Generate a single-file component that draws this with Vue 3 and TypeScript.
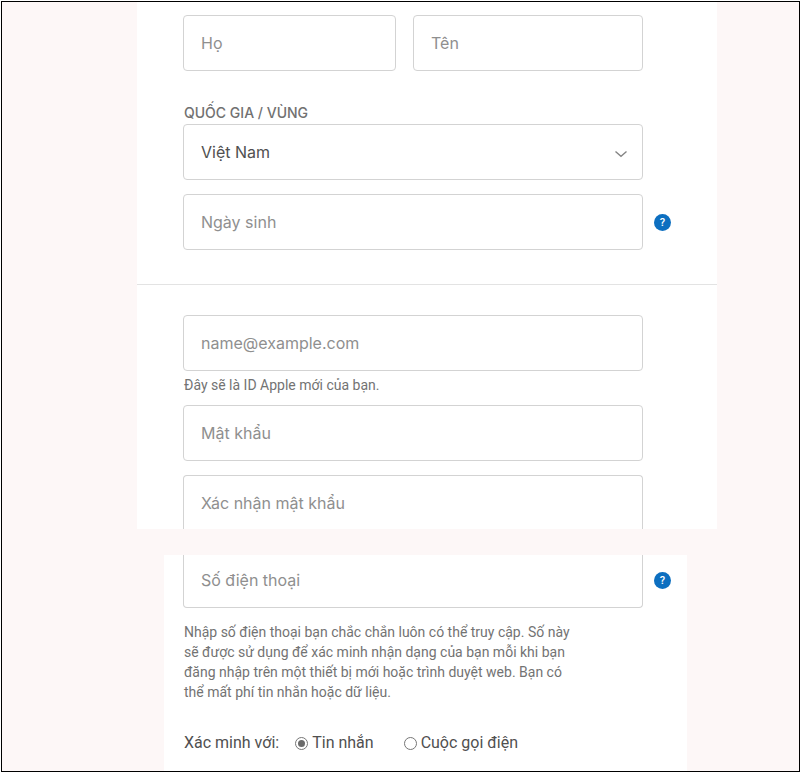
<script setup lang="ts">
import { ref } from 'vue'

const lastName = ref('')
const firstName = ref('')
const country = ref('VN')
const birthday = ref('')
const email = ref('')
const password = ref('')
const confirmPassword = ref('')
const phone = ref('')
const verifyMethod = ref('sms')
</script>

<template>
  <form class="page" @submit.prevent>
    <section class="panel account">
      <div class="column names">
        <input v-model="lastName" class="field" type="text" placeholder="Họ" aria-label="Họ" />
        <input v-model="firstName" class="field" type="text" placeholder="Tên" aria-label="Tên" />
      </div>

      <div class="column country">
        <label class="caption" for="country">QUỐC GIA / VÙNG</label>
        <div class="select-wrap">
          <select id="country" v-model="country" class="field">
            <option value="VN">Việt Nam</option>
          </select>
          <svg class="chevron" width="14" height="8" viewBox="0 0 14 8" aria-hidden="true">
            <path d="M1.5 1.5 7 6.3l5.5-4.8" />
          </svg>
        </div>
      </div>

      <div class="row birthday">
        <input v-model="birthday" class="field" type="text" placeholder="Ngày sinh" aria-label="Ngày sinh" />
        <button class="help" type="button">?</button>
      </div>

      <hr class="divider" />

      <div class="column">
        <input id="email" v-model="email" class="field" type="email" placeholder="name@example.com" aria-labelledby="email-note" />
        <label id="email-note" class="note" for="email">Đây sẽ là ID Apple mới của bạn.</label>
        <input v-model="password" class="field" type="password" placeholder="Mật khẩu" aria-label="Mật khẩu" />
        <input v-model="confirmPassword" class="field open-bottom" type="password" placeholder="Xác nhận mật khẩu" aria-label="Xác nhận mật khẩu" />
      </div>
    </section>

    <section class="panel phone">
      <div class="row">
        <input v-model="phone" class="field open-top" type="tel" placeholder="Số điện thoại" aria-label="Số điện thoại" />
        <button class="help" type="button">?</button>
      </div>
      <p class="info">
        Nhập số điện thoại bạn chắc chắn luôn có thể truy cập. Số này sẽ được sử dụng để xác minh nhận dạng của bạn mỗi khi bạn đăng nhập trên một thiết bị mới hoặc trình duyệt web. Bạn có thể mất phí tin nhắn hoặc dữ liệu.
      </p>
      <div class="verify" role="radiogroup" aria-labelledby="verify-title">
        <span id="verify-title">Xác minh với:</span>
        <label class="choice"><input v-model="verifyMethod" type="radio" name="verify" value="sms" />Tin nhắn</label>
        <label class="choice"><input v-model="verifyMethod" type="radio" name="verify" value="call" />Cuộc gọi điện</label>
      </div>
    </section>
  </form>
</template>

<style>
body {
  background: #fff;
}
</style>

<style scoped>
.page,
.page * {
  box-sizing: border-box;
}

.page {
  display: flex;
  flex-direction: column;
  gap: 26px;
  min-height: calc(100vh - 1px);
  margin: 1px 0 0 1px;
  border: 1px solid #000;
  background: #fdf7f7;
  color: #505050;
  font-family: Roboto, "Liberation Sans", sans-serif;
}

.panel {
  background: #fff;
}

.account {
  margin: 0 82px 0 135px;
  padding-top: 13px;
}

.column {
  display: flex;
  flex-direction: column;
  padding: 0 74px 0 46px;
}

.names {
  display: grid;
  grid-template-columns: 213fr 230fr;
  gap: 17px;
}

.country {
  margin-top: 30px;
}

.caption {
  padding-left: 1px;
  color: #717171;
  font-family: Inter, "Liberation Sans", sans-serif;
  font-size: 14px;
  font-weight: 500;
  line-height: 23px;
}

.row {
  display: flex;
  align-items: center;
  gap: 11px;
}

.birthday {
  margin-top: 14px;
  padding: 0 46px;
}

.field {
  display: block;
  width: 100%;
  min-width: 0;
  height: 56px;
  margin: 0;
  padding: 0 17px;
  border: 1px solid #d3d3d3;
  border-radius: 4px;
  outline: none;
  background: #fff;
  color: #505050;
  font-family: Inter, "Liberation Sans", sans-serif;
  font-size: 16px;
  appearance: none;
}

.field::placeholder {
  color: #8f8f8f;
  opacity: 1;
}

.field:focus {
  border-color: #0070c9;
}

.select-wrap {
  display: grid;
  align-items: center;
}

.select-wrap > * {
  grid-area: 1 / 1;
}

.chevron {
  justify-self: end;
  margin-right: 15px;
  margin-top: 3px;
  fill: none;
  stroke: #858585;
  stroke-width: 1.4;
  pointer-events: none;
}

.help {
  flex: none;
  width: 17px;
  height: 17px;
  padding: 0;
  border: 0;
  border-radius: 50%;
  background: #0d6fc0;
  color: #fff;
  font-family: Roboto, "Liberation Sans", sans-serif;
  font-size: 11px;
  font-weight: 500;
  line-height: 17px;
  text-align: center;
}

.divider {
  width: 100%;
  height: 1px;
  margin: 34px 0 30px;
  border: 0;
  background: #e3e3e3;
}

.note {
  padding-left: 1px;
  margin: 4px 0 10px;
  color: #737373;
  font-size: 14px;
  line-height: 20px;
}

.open-bottom {
  height: 54px;
  margin-top: 14px;
  border-bottom: 0;
  border-radius: 4px 4px 0 0;
}

.phone {
  flex: 1;
  margin: 0 112px 0 162px;
  padding: 0 16px 18px 19px;
}

.open-top {
  height: 53px;
  padding-bottom: 2px;
  border-top: 0;
  border-radius: 0 0 4px 4px;
}

.phone .help {
  margin-bottom: 3px;
}

.info {
  max-width: 398px;
  margin: 14px 0 0;
  padding-left: 1px;
  color: #737373;
  font-size: 14px;
  line-height: 20px;
}

.verify {
  display: flex;
  align-items: center;
  margin-top: 31px;
  padding-left: 1px;
  font-size: 16px;
  line-height: 20px;
}

.choice {
  display: flex;
  align-items: center;
  gap: 4px;
  margin-left: 16px;
}

.choice + .choice {
  margin-left: 30px;
}

.choice input {
  width: 13px;
  height: 13px;
  margin: 0;
  border: 1px solid #767676;
  border-radius: 50%;
  background: #fff;
  appearance: none;
}

.choice input:checked {
  padding: 2px;
  background: #6b6b6b content-box;
}
</style>
